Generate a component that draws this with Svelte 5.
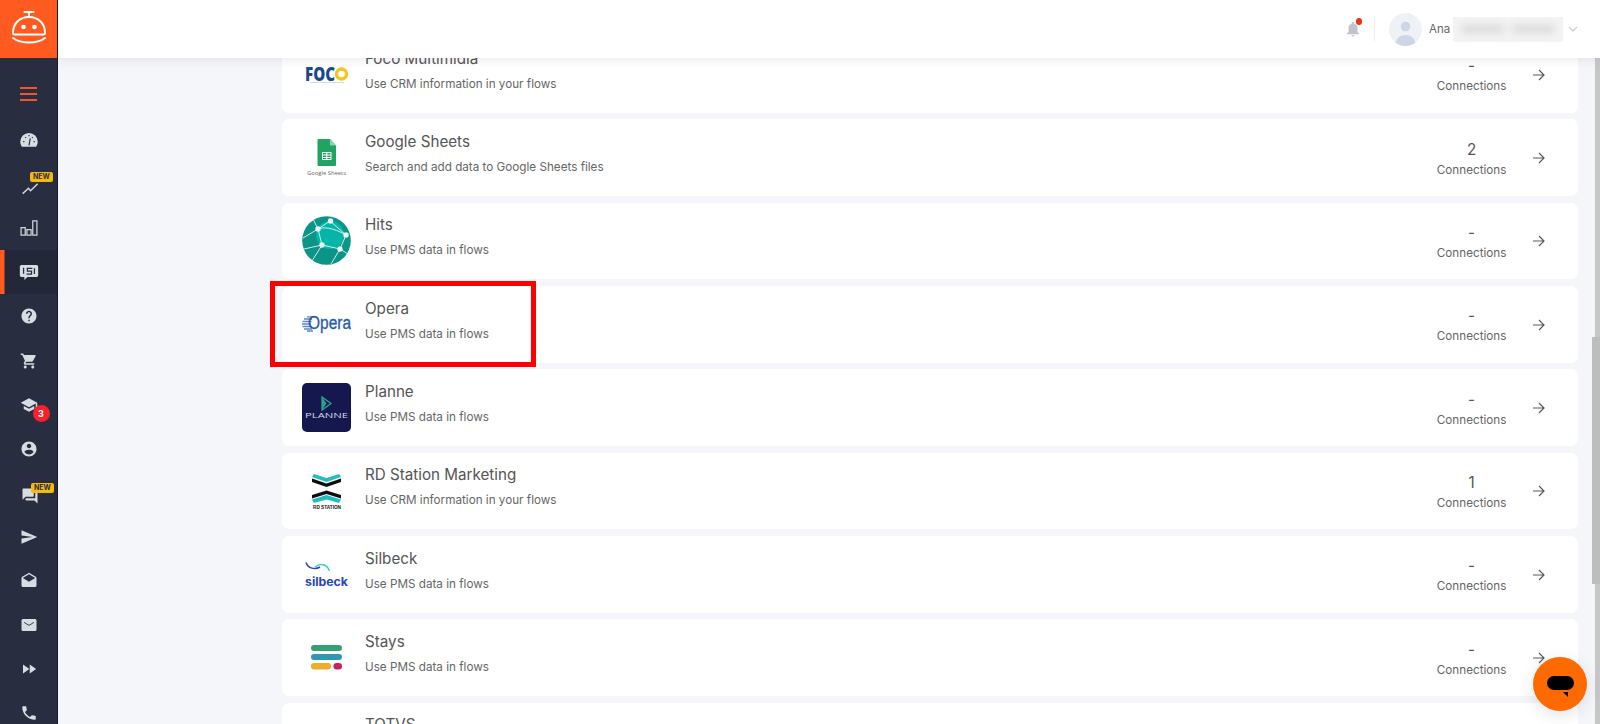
<script>
  const nav = [
    { key: 'gauge', size: 20 },
    { key: 'trend', badge: 'new', offset: 'off-trend', size: 20 },
    { key: 'bars', size: 20 },
    { key: 'flows', active: true, size: 20 },
    { d: 'M12 2C6.48 2 2 6.48 2 12s4.48 10 10 10 10-4.48 10-10S17.52 2 12 2zm1 17h-2v-2h2v2zm2.07-7.75l-.9.92C13.45 12.9 13 13.5 13 15h-2v-.5c0-1.1.45-2.1 1.17-2.83l1.24-1.26c.37-.36.59-.86.59-1.41 0-1.1-.9-2-2-2s-2 .9-2 2H8c0-2.21 1.79-4 4-4s4 1.79 4 4c0 .88-.36 1.68-.93 2.25z' },
    { d: 'M7 18c-1.1 0-1.99.9-1.99 2S5.9 22 7 22s2-.9 2-2-.9-2-2-2zM1 2v2h2l3.6 7.59-1.35 2.45c-.16.28-.25.61-.25.96 0 1.1.9 2 2 2h12v-2H7.42c-.14 0-.25-.11-.25-.25l.03-.12.9-1.63h7.45c.75 0 1.41-.41 1.75-1.03l3.58-6.49c.08-.14.12-.31.12-.48 0-.55-.45-1-1-1H5.21l-.94-2H1zm16 16c-1.1 0-1.99.9-1.99 2s.89 2 1.99 2 2-.9 2-2-.9-2-2-2z' },
    { d: 'M5 13.18v4L12 21l7-3.82v-4L12 17l-7-3.82zM12 3L1 9l11 6 9-4.91V17h2V9L12 3z', count: 3 },
    { d: 'M12 2C6.48 2 2 6.48 2 12s4.48 10 10 10 10-4.48 10-10S17.52 2 12 2zm0 3c1.66 0 3 1.34 3 3s-1.34 3-3 3-3-1.34-3-3 1.34-3 3-3zm0 14.2c-2.5 0-4.71-1.28-6-3.22.03-1.99 4-3.08 6-3.08 1.99 0 5.97 1.09 6 3.08-1.29 1.94-3.5 3.22-6 3.22z' },
    { d: 'M21 6h-2v9H6v2c0 .55.45 1 1 1h11l4 4V7c0-.55-.45-1-1-1zm-4 6V3c0-.55-.45-1-1-1H3c-.55 0-1 .45-1 1v14l4-4h10c.55 0 1-.45 1-1z', badge: 'new', offset: 'off-chat' },
    { d: 'M2.01 21L23 12 2.01 3 2 10l15 2-15 2z' },
    { d: 'M21.99 8c0-.72-.37-1.35-.94-1.7L12 1 2.95 6.3C2.38 6.65 2 7.28 2 8v10c0 1.1.9 2 2 2h16c1.1 0 2-.9 2-2l-.01-10zM12 13L3.74 7.84 12 3l8.26 4.84L12 13z' },
    { key: 'mail' },
    { d: 'M4 18l8.5-6L4 6v12zm9-12v12l8.5-6L13 6z' },
    { d: 'M6.62 10.79c1.44 2.83 3.76 5.14 6.59 6.59l2.2-2.2c.27-.27.67-.36 1.02-.24 1.12.37 2.33.57 3.57.57.55 0 1 .45 1 1V20c0 .55-.45 1-1 1-9.39 0-17-7.61-17-17 0-.55.45-1 1-1h3.5c.55 0 1 .45 1 1 0 1.25.2 2.45.57 3.57.11.35.03.74-.25 1.02l-2.2 2.2z' }
  ];

  const rows = [
    { logo: 'foco', title: 'Foco Multimidia', sub: 'Use CRM information in your flows', value: '-' },
    { logo: 'sheets', title: 'Google Sheets', sub: 'Search and add data to Google Sheets files', value: '2' },
    { logo: 'hits', title: 'Hits', sub: 'Use PMS data in flows', value: '-' },
    { logo: 'opera', title: 'Opera', sub: 'Use PMS data in flows', value: '-' },
    { logo: 'planne', title: 'Planne', sub: 'Use PMS data in flows', value: '-' },
    { logo: 'rd', title: 'RD Station Marketing', sub: 'Use CRM information in your flows', value: '1' },
    { logo: 'silbeck', title: 'Silbeck', sub: 'Use PMS data in flows', value: '-' },
    { logo: 'stays', title: 'Stays', sub: 'Use PMS data in flows', value: '-' },
    { logo: 'totvs', title: 'TOTVS', sub: 'Use PMS data in flows', value: '-' }
  ];
</script>

<div class="shell">
  <aside class="sidebar">
    <div class="brand">
      <svg width="38" height="35" viewBox="0 0 38 35" fill="none" stroke="#fff" stroke-width="2" stroke-linecap="round">
        <path d="M14.500 2h9M19 2v5" />
        <path d="M3 23C3 13 10 7 19 7s16 6 16 16c0 1-1 1.500-2 1.500H5c-1 0-2-.5-2-1.500z" />
        <path d="M3 28c4 3 9 4.500 16 4.500S31 31 35 28" />
        <circle cx="13.500" cy="17" r="2.300" fill="#fff" stroke="none" />
        <circle cx="24.500" cy="17" r="2.300" fill="#fff" stroke="none" />
      </svg>
    </div>
    <div class="burger"><span></span><span></span><span></span></div>
    <nav class="nav">
      {#each nav as item}
        <div class="nav-item" class:active={item.active}>
          <span class="icon {item.offset ?? ''}">
            <svg width={item.size ?? 18} height={item.size ?? 18} viewBox="0 0 24 24" fill="#d7dde0">
              {#if item.key === 'gauge'}
                <path d="M3.500 20C2.500 18.500 1.500 16.500 1.500 14a10.500 10.500 0 0 1 21 0c0 2.500-1 4.500-2 6z" />
                <path d="M12 18.500 13.500 10M5 14h1.500M7.500 8.500l1 1M12 6v1.500M16.500 8.500l-1 1M19 14h-1.500" stroke="#282e40" stroke-width="1.400" fill="none" />
              {:else if item.key === 'trend'}
                <path d="M2 20 9 13.500l2.500 3L20 8" fill="none" stroke="#cfd5d9" stroke-width="1.800" />
              {:else if item.key === 'bars'}
                <path d="M2.500 11.500h5v9h-5zM9.500 14h5v6.500h-5zM16.500 3.500h5v17h-5z" fill="none" stroke="#cfd5d9" stroke-width="1.500" />
              {:else if item.key === 'flows'}
                <path d="M3 3.500h18c1.100 0 2 .9 2 2V16c0 1.100-.9 2-2 2H10l-3.500 3.500V18H3c-1.100 0-2-.9-2-2V5.500c0-1.100.9-2 2-2z" />
                <path d="M16 7.500h-6v3.500h5v3.500H9M5.500 7v7M18.500 7.500v7" fill="none" stroke="#282e40" stroke-width="1.500" />
              {:else if item.key === 'mail'}
                <rect x="2" y="4" width="20" height="16" rx="2" />
                <path d="M5.500 8.500 12 12.500l6.500-4" fill="none" stroke="#282e40" stroke-width="1.200" />
              {:else}
                <path d={item.d} />
              {/if}
            </svg>
          </span>
          {#if item.badge}<span class="new {item.offset ?? ''}">NEW</span>{/if}
          {#if item.count}<span class="count">{item.count}</span>{/if}
        </div>
      {/each}
    </nav>
  </aside>

  <main class="main">
    <header class="topbar">
      <span class="bell">
        <svg width="18" height="18" viewBox="0 0 24 24" fill="#c0c4cf"><path d="M12 22c1.100 0 2-.9 2-2h-4c0 1.100.9 2 2 2zm6-6v-5c0-3.070-1.630-5.640-4.500-6.320V4c0-.83-.67-1.500-1.500-1.500s-1.500.67-1.500 1.500v.68C7.640 5.360 6 7.920 6 11v5l-2 2v1h16v-1l-2-2z" /></svg>
        <i class="dot"></i>
      </span>
      <span class="divider"></span>
      <span class="avatar">
        <svg width="33" height="33" viewBox="0 0 33 33"><circle cx="16.500" cy="13.500" r="4.800" fill="#cdd6e4" /><path d="M6.500 33c0-7.500 4-11 10-11s10 3.500 10 11z" fill="#cdd6e4" /></svg>
      </span>
      <span class="user">Ana l</span>
      <span class="redacted"><i></i><i></i></span>
      <svg class="chev" width="10" height="6" viewBox="0 0 10 6" fill="none" stroke="#c4c9d3" stroke-width="1.100"><path d="M1 1l4 4 4-4" /></svg>
    </header>

    <div class="list">
      {#each rows as row}
        <article class="card">
          <div class="logo">
            {#if row.logo === 'foco'}
              <svg width="49" height="49" viewBox="0 0 49 49">
                <text x="3" y="30.700" class="foco" fill="#1a4a8c" textLength="30" lengthAdjust="spacingAndGlyphs">FOC</text>
                <circle cx="39.500" cy="24" r="5" fill="none" stroke="#f7c61c" stroke-width="3.400" />
                <rect x="8" y="32" width="34" height="1" fill="#d8dae0" />
              </svg>
            {:else if row.logo === 'sheets'}
              <svg width="49" height="49" viewBox="0 0 49 49">
                <path d="M15.500 7a1 1 0 0 1 1-1H28l6 6.500V32a1 1 0 0 1-1 1H16.500a1 1 0 0 1-1-1z" fill="#1fa463" />
                <path d="M28 6v6.500h6z" fill="#8ed1b1" />
                <path d="M20 19h9.500v8H20zM21 20v1.500h3.200V20zM25.300 20v1.500h3.200V20zM21 22.500V24h3.200v-1.500zM25.300 22.500V24h3.200v-1.500zM21 25v1h3.200v-1zM25.300 25v1h3.200v-1z" fill="#fff" fill-rule="evenodd" />
                <text x="5" y="42" class="sheets-txt" textLength="39" lengthAdjust="spacingAndGlyphs">Google Sheets</text>
              </svg>
            {:else if row.logo === 'hits'}
              <svg width="49" height="49" viewBox="0 0 49 49">
                <circle cx="24.500" cy="24.500" r="24.300" fill="#0b9488" />
                <circle cx="28" cy="19" r="14" fill="#04b5a8" />
                <path d="M1 22 16 13 28 5M16 13c5-2 14-2 28 6M16 13 20 29 38 33 44 19M20 29 2 33M20 29 10 45M38 33 29 48M38 33 46 38M16 13 11 3M28 5 44 19" fill="none" stroke="#e4f4f2" stroke-width=".9" />
                <g fill="#e8f6f4"><circle cx="16" cy="13" r="2.700" /><circle cx="28.500" cy="5" r="2.700" /><circle cx="44" cy="19" r="2.700" /><circle cx="20" cy="29" r="2.700" /><circle cx="38" cy="33" r="2.700" /></g>
              </svg>
            {:else if row.logo === 'opera'}
              <svg width="49" height="49" viewBox="0 0 49 49">
                <path d="M0 24h9M.5 21.500h9M.5 26.500h9M2 19h8M2 29h8M5 16.800h6M5 31h6" stroke="#5d8bcc" stroke-width="1.300" />
                <text x="6" y="28.800" class="opera" fill="#2a5ca8" textLength="43" lengthAdjust="spacingAndGlyphs">Opera</text>
              </svg>
            {:else if row.logo === 'planne'}
              <svg width="49" height="49" viewBox="0 0 49 49">
                <rect width="49" height="49" rx="5" fill="#15174f" />
                <path d="M20 14l9 6.500-9 6.500z" fill="none" stroke="#2fae93" stroke-width="1.200" />
                <path d="M20 14v13l4.500-6.500z" fill="#2f9e8e" />
                <text x="3" y="34.500" class="planne" fill="#d5d9ea" textLength="43" lengthAdjust="spacingAndGlyphs">PLANNE</text>
              </svg>
            {:else if row.logo === 'rd'}
              <svg width="49" height="49" viewBox="0 0 49 49">
                <path d="M12 8 24.500 12 37 8 39 11 24.500 16 10 11z" fill="#22bcc4" />
                <path d="M10 12.500 24.500 17.500 39 12.500V16L24.500 21 10 16z" fill="#0d0d0d" />
                <path d="M10 29 24.500 24.500 39 29V32.500L24.500 28 10 32.500z" fill="#0d0d0d" />
                <path d="M10 33.500 24.500 29 39 33.500 37 37 24.500 33.500 12 37z" fill="#22bcc4" />
                <text x="11" y="42.500" class="rd" textLength="28" lengthAdjust="spacingAndGlyphs">RD STATION</text>
              </svg>
            {:else if row.logo === 'silbeck'}
              <svg width="49" height="49" viewBox="0 0 49 49">
                <path d="M4 12.500c2 6 9 7.500 14 4.500" fill="none" stroke="#2746b8" stroke-width="1.500" />
                <path d="M13 17c5-4 12-3.500 14.500 4" fill="none" stroke="#2fd8b7" stroke-width="1.500" />
                <text x="3" y="36" class="silbeck" fill="#2746b8" textLength="43" lengthAdjust="spacingAndGlyphs">silbeck</text>
              </svg>
            {:else if row.logo === 'stays'}
              <svg width="49" height="49" viewBox="0 0 49 49">
                <rect x="9" y="12" width="31" height="6" rx="3" fill="#35a172" />
                <rect x="9" y="21" width="31" height="6" rx="3" fill="#2f97b4" />
                <rect x="9" y="30" width="20" height="6.500" rx="3" fill="#ecae2c" />
                <rect x="31.500" y="30" width="8.500" height="6.500" rx="3.200" fill="#c9205e" />
              </svg>
            {:else if row.logo === 'totvs'}
              <svg width="49" height="49" viewBox="0 0 49 49"><circle cx="24.500" cy="24.500" r="13" fill="#1d4f73" /></svg>
            {/if}
          </div>
          <div class="body">
            <h3>{row.title}</h3>
            <p>{row.sub}</p>
          </div>
          <div class="stat">
            <strong>{row.value}</strong>
            <span>Connections</span>
          </div>
          <svg class="arrow" width="13" height="12" viewBox="0 0 13 12" fill="none" stroke="#5a5a5a" stroke-width="1.200"><path d="M1 6h11M7 1l5 5-5 5" /></svg>
        </article>
      {/each}
    </div>

    <div class="highlight"></div>
    <div class="track"></div>
    <div class="thumb"></div>
    <button class="support" aria-label="Chat">
      <span class="pill"></span>
      <span class="tail"></span>
    </button>
  </main>
</div>

<style>
  :global(body) {
    margin: 0;
    background: #f5f6fa;
    font-family: Inter, "Liberation Sans", sans-serif;
  }
  .shell {
    display: flex;
    height: 724px;
    overflow: hidden;
  }
  .sidebar {
    width: 57px;
    flex: none;
    background: #282e40;
    border-right: 1px solid #171b28;
    display: flex;
    flex-direction: column;
    overflow: hidden;
  }
  .brand {
    height: 58px;
    flex: none;
    margin-right: -1px;
    background: #ff5a1f;
    display: flex;
    align-items: center;
    justify-content: center;
    padding-bottom: 3px;
    box-sizing: border-box;
  }
  .burger {
    height: 60px;
    flex: none;
    display: flex;
    flex-direction: column;
    align-items: center;
    justify-content: center;
    gap: 4px;
    padding-top: 12px;
    box-sizing: border-box;
  }
  .burger span {
    width: 17.500px;
    height: 2px;
    background: #f0562a;
  }
  .nav-item {
    position: relative;
    height: 44.100px;
    flex: none;
    display: flex;
    align-items: center;
    justify-content: center;
  }
  .nav-item.active {
    background: #232838;
    box-shadow: inset 4.500px 0 0 #ff5a1f;
  }
  .icon {
    display: flex;
  }
  .icon.off-trend {
    transform: translate(2px, 3px);
  }
  .icon.off-chat {
    transform: translate(1px, 3px);
  }
  .new {
    position: absolute;
    left: 30px;
    height: 10px;
    padding: 0 3px;
    border-radius: 2px;
    background: #f6b90d;
    color: #2a2f3f;
    font: 700 7px/10px Inter, sans-serif;
  }
  .new.off-trend {
    top: 10px;
  }
  .new.off-chat {
    left: 31px;
    top: 12px;
  }
  .count {
    position: absolute;
    left: 32.500px;
    top: 22px;
    width: 17px;
    height: 17px;
    border-radius: 50%;
    background: #f5222d;
    color: #fff;
    font: 700 9px/17px Inter, sans-serif;
    text-align: center;
  }
  .main {
    position: relative;
    flex: 1;
    min-width: 0;
    background: #f5f6fa;
    overflow: hidden;
  }
  .topbar {
    position: absolute;
    inset: 0 0 auto 0;
    z-index: 3;
    height: 58px;
    background: #fff;
    box-shadow: 0 2px 10px rgba(40, 46, 64, .09);
    display: flex;
    align-items: center;
    justify-content: flex-end;
    padding-right: 22px;
    box-sizing: border-box;
  }
  .bell {
    position: relative;
    display: flex;
    margin-right: 12px;
  }
  .dot {
    position: absolute;
    top: -2px;
    right: 0;
    width: 6.500px;
    height: 6.500px;
    border-radius: 50%;
    background: #e8380d;
  }
  .divider {
    width: 1px;
    height: 24px;
    background: #eceef2;
    margin-right: 14px;
  }
  .avatar {
    width: 33px;
    height: 33px;
    border-radius: 50%;
    background: #eef1f6;
    overflow: hidden;
    margin-right: 7px;
    display: flex;
  }
  .user {
    width: 24px;
    flex: none;
    font-size: 11.500px;
    color: #666;
    white-space: nowrap;
  }
  .redacted {
    width: 110px;
    height: 25px;
    flex: none;
    background: #f4f4f4;
    display: flex;
    align-items: center;
    gap: 8px;
    padding: 0 8px;
    box-sizing: border-box;
    overflow: hidden;
    margin-right: 5px;
  }
  .redacted i {
    flex: 1;
    height: 8px;
    background: #d8d8d8;
    filter: blur(4px);
  }
  .list {
    display: flex;
    flex-direction: column;
    gap: 6.670px;
    padding: 36px 22.400px 0 224px;
  }
  .card {
    height: 76.670px;
    flex: none;
    background: #fff;
    border-radius: 7px;
    display: flex;
    align-items: center;
    padding-left: 20px;
    box-sizing: border-box;
  }
  .logo {
    width: 49px;
    height: 49px;
    flex: none;
    margin-right: 14px;
  }
  .logo svg {
    display: block;
  }
  .foco {
    font: 800 18.800px "Open Sans", sans-serif;
  }
  .sheets-txt {
    font: 400 5.800px "Open Sans", sans-serif;
    fill: #666;
  }
  .opera {
    font: 400 18px "Liberation Sans", sans-serif;
    stroke: #2a5ca8;
    stroke-width: .35px;
  }
  .planne {
    font: 400 7px "Open Sans", sans-serif;
  }
  .rd {
    font: 700 4.500px "Liberation Sans", sans-serif;
    fill: #111;
  }
  .silbeck {
    font: 700 11.500px Inter, sans-serif;
  }
  .body {
    flex: 1;
    align-self: flex-start;
    padding-top: 11.800px;
    min-width: 0;
  }
  h3 {
    margin: 0 0 6px;
    font-size: 15.200px;
    line-height: 21px;
    font-weight: 400;
    color: #555;
  }
  p {
    margin: 0;
    font-size: 11.700px;
    line-height: 18px;
    color: #666;
  }
  .stat {
    width: 120px;
    display: flex;
    flex-direction: column;
    align-items: center;
    padding: 3px 0 0 2px;
  }
  .stat strong {
    font-size: 15.200px;
    line-height: 21px;
    font-weight: 400;
    color: #555;
  }
  .stat span {
    font-size: 11.700px;
    line-height: 20px;
    color: #666;
  }
  .arrow {
    margin: 1px 33px 0 0;
    flex: none;
  }
  .highlight {
    position: absolute;
    z-index: 2;
    left: 212px;
    top: 281px;
    width: 266px;
    height: 85.700px;
    border: 5.500px solid #f00;
    box-sizing: border-box;
  }
  .track {
    position: absolute;
    z-index: 1;
    right: 0;
    top: 58px;
    bottom: 0;
    width: 5px;
    background: #c6c6c6;
  }
  .thumb {
    position: absolute;
    z-index: 1;
    right: 0;
    top: 337px;
    height: 247px;
    width: 8px;
    background: #bdbdbd;
  }
  .support {
    position: absolute;
    z-index: 4;
    right: 13px;
    top: 657px;
    width: 54px;
    height: 54px;
    padding: 0;
    border: none;
    border-radius: 50%;
    background: #ff6a00;
    box-shadow: 0 4px 16px rgba(40, 46, 64, .13);
  }
  .pill {
    position: absolute;
    left: 13.500px;
    top: 19px;
    width: 27px;
    height: 13.500px;
    border-radius: 7px;
    background: #000;
  }
  .tail {
    position: absolute;
    left: 30px;
    top: 35px;
    border-top: 5px solid #000;
    border-left: 5px solid transparent;
  }
</style>
